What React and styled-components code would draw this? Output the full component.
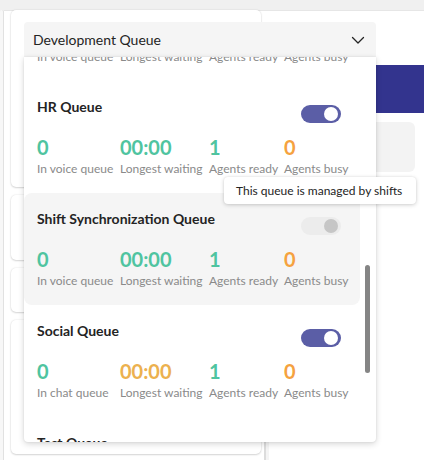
import React, { useLayoutEffect, useRef } from "react";
import styled, { createGlobalStyle } from "styled-components";

const Global = createGlobalStyle`
  html, body { margin: 0; padding: 0; background: #f0f0f0; }
  body { font-family: "Lato", "Noto Sans", sans-serif; color: #242424; }
  * { box-sizing: border-box; }
`;

const Page = styled.div`
  position: relative;
  width: 424px;
  height: 460px;
  overflow: hidden;
  display: flex;
  padding-top: 10px;
`;

const Rail = styled.div`
  width: 4px;
  background: #f7f7f7;
  border-right: 1px solid #e1e1e1;
  border-radius: 3px 3px 0 0;
`;

const Main = styled.div`
  flex: 1;
  display: grid;
  grid-template-columns: 250px 8px 1fr;
  background: #ffffff;
  border-top: 1px solid #e6e6e6;
  padding-left: 7px;
`;

const LeftColumn = styled.div`
  display: flex;
  flex-direction: column;
  gap: 8px;
  margin-top: -1px;
`;

const BgCard = styled.div`
  height: ${(p) => p.$h}px;
  flex: none;
  background: #ffffff;
  border-radius: 5px;
  box-shadow: 0 0 2px rgba(0, 0, 0, 0.12), 0 1px 2px rgba(0, 0, 0, 0.14);
`;

const Divider = styled.div`
  margin-top: 60px;
  background: #f4f4f4;
  border-left: 2px solid #dcdcdc;
  margin-left: 3px;
`;

const RightColumn = styled.div`
  display: flex;
  flex-direction: column;
  padding-top: 54px;
`;

const Banner = styled.div`
  height: 48px;
  background: #33348e;
`;

const GrayTile = styled.div`
  height: 50px;
  margin: 9px 9px 0 0;
  background: #f3f3f3;
  border-radius: 6px;
`;

const Combo = styled.div`
  position: absolute;
  left: 24px;
  top: 22px;
  width: 352px;
  display: flex;
  flex-direction: column;
`;

const Trigger = styled.div`
  height: 35px;
  display: flex;
  align-items: center;
  justify-content: space-between;
  padding: 0 10px 0 9px;
  background: #f5f5f5;
  border-radius: 4px 4px 0 0;
  font-size: 14px;
  color: #242424;
`;

const Popup = styled.div`
  position: relative;
  height: 385px;
  background: #ffffff;
  border-radius: 0 0 4px 4px;
  box-shadow: 0 2px 6px rgba(0, 0, 0, 0.16), 0 0 2px rgba(0, 0, 0, 0.1);
`;

const List = styled.div`
  height: 100%;
  overflow: hidden;
  padding: 4px 16px 52px 0;
`;

const Thumb = styled.div`
  position: absolute;
  left: 341px;
  top: 208px;
  width: 5px;
  height: 108px;
  border-radius: 3px;
  background: #858585;
`;

const Item = styled.div`
  height: 112px;
  padding: 16px 14px 0 13px;
  border-radius: 8px;
  background: ${(p) => (p.$hover ? "#f5f5f5" : "transparent")};
`;

const TitleRow = styled.div`
  display: flex;
  justify-content: space-between;
  align-items: flex-start;
  height: 20px;
`;

const Title = styled.div`
  font-size: 14px;
  line-height: 20px;
  font-weight: 700;
  color: #242424;
`;

const trackBg = { on: "#5b5ea6", disabled: "#ececec", off: "#ffffff" };
const knobBg = { on: "#ffffff", disabled: "#c6c6c6", off: "#e6e6e6" };

const Track = styled.span`
  width: 40px;
  height: 18px;
  margin-top: 8px;
  margin-right: 5px;
  border-radius: 9px;
  display: flex;
  align-items: center;
  justify-content: ${(p) => (p.$state === "off" ? "flex-start" : "flex-end")};
  padding: 0 3px;
  background: ${(p) => trackBg[p.$state]};
`;

const Knob = styled.span`
  width: 14px;
  height: 14px;
  border-radius: 50%;
  background: ${(p) => knobBg[p.$state]};
`;

const Stats = styled.div`
  display: grid;
  grid-template-columns: 83px 89px 75px 1fr;
  margin-top: 18px;
`;

const Stat = styled.div`
  display: flex;
  flex-direction: column;
  gap: 2px;
`;

const tones = { green: "#4fc4a0", orange: "#f5a23f", yellow: "#ecb14f" };

const Value = styled.div`
  font-size: 20px;
  line-height: 24px;
  font-weight: 700;
  color: ${(p) => tones[p.$tone]};
`;

const Label = styled.div`
  font-size: 12px;
  line-height: 16px;
  color: #8a8a8a;
  white-space: nowrap;
`;

const Tooltip = styled.div`
  position: absolute;
  left: 224px;
  top: 177px;
  width: 192px;
  height: 27px;
  display: flex;
  align-items: center;
  padding-left: 12px;
  background: #ffffff;
  border-radius: 4px;
  box-shadow: 0 1px 4px rgba(0, 0, 0, 0.18), 0 0 2px rgba(0, 0, 0, 0.08);
  font-size: 12px;
  color: #242424;
  white-space: nowrap;
`;

const voice = () => [
  { value: "0", label: "In voice queue", tone: "green" },
  { value: "00:00", label: "Longest waiting", tone: "green" },
  { value: "1", label: "Agents ready", tone: "green" },
  { value: "0", label: "Agents busy", tone: "orange" },
];

const queues = [
  { name: "Accounts Queue", state: "on", stats: voice() },
  { name: "Billing Queue", state: "on", stats: voice() },
  { name: "Claims Queue", state: "on", stats: voice() },
  { name: "Customer Care", state: "on", stats: voice() },
  { name: "Development Queue", state: "on", stats: voice() },
  { name: "Escalation Queue", state: "on", stats: voice() },
  { name: "General Queue", state: "on", stats: voice() },
  { name: "HR Queue", state: "on", stats: voice() },
  { name: "Shift Synchronization Queue", state: "disabled", hover: true, stats: voice() },
  {
    name: "Social Queue",
    state: "on",
    stats: [
      { value: "0", label: "In chat queue", tone: "green" },
      { value: "00:00", label: "Longest waiting", tone: "yellow" },
      { value: "1", label: "Agents ready", tone: "green" },
      { value: "0", label: "Agents busy", tone: "orange" },
    ],
  },
  { name: "Test Queue", state: "off", stats: voice() },
  { name: "Training Queue", state: "off", stats: voice() },
];

function Chevron() {
  return (
    <svg width="16" height="16" viewBox="0 0 16 16" fill="none">
      <path d="M2.5 5.5 L8 11 L13.5 5.5" stroke="#242424" strokeWidth="1.3" strokeLinecap="round" strokeLinejoin="round" />
    </svg>
  );
}

export default function App() {
  const listRef = useRef(null);
  useLayoutEffect(() => {
    if (listRef.current) listRef.current.scrollTop = 764;
  }, []);

  return (
    <>
      <Global />
      <Page>
        <Rail />
        <Main>
          <LeftColumn>
            <BgCard $h={177} />
            <BgCard $h={65} />
            <BgCard $h={44} />
            <BgCard $h={134} />
          </LeftColumn>
          <Divider />
          <RightColumn>
            <Banner />
            <GrayTile />
          </RightColumn>
        </Main>

        <Combo>
          <Trigger>
            <span>Development Queue</span>
            <Chevron />
          </Trigger>
          <Popup>
            <List ref={listRef}>
              {queues.map((q) => (
                <Item key={q.name} $hover={q.hover}>
                  <TitleRow>
                    <Title>{q.name}</Title>
                    <Track $state={q.state}>
                      <Knob $state={q.state} />
                    </Track>
                  </TitleRow>
                  <Stats>
                    {q.stats.map((s) => (
                      <Stat key={s.label}>
                        <Value $tone={s.tone}>{s.value}</Value>
                        <Label>{s.label}</Label>
                      </Stat>
                    ))}
                  </Stats>
                </Item>
              ))}
            </List>
            <Thumb />
          </Popup>
        </Combo>

        <Tooltip>This queue is managed by shifts</Tooltip>
      </Page>
    </>
  );
}
